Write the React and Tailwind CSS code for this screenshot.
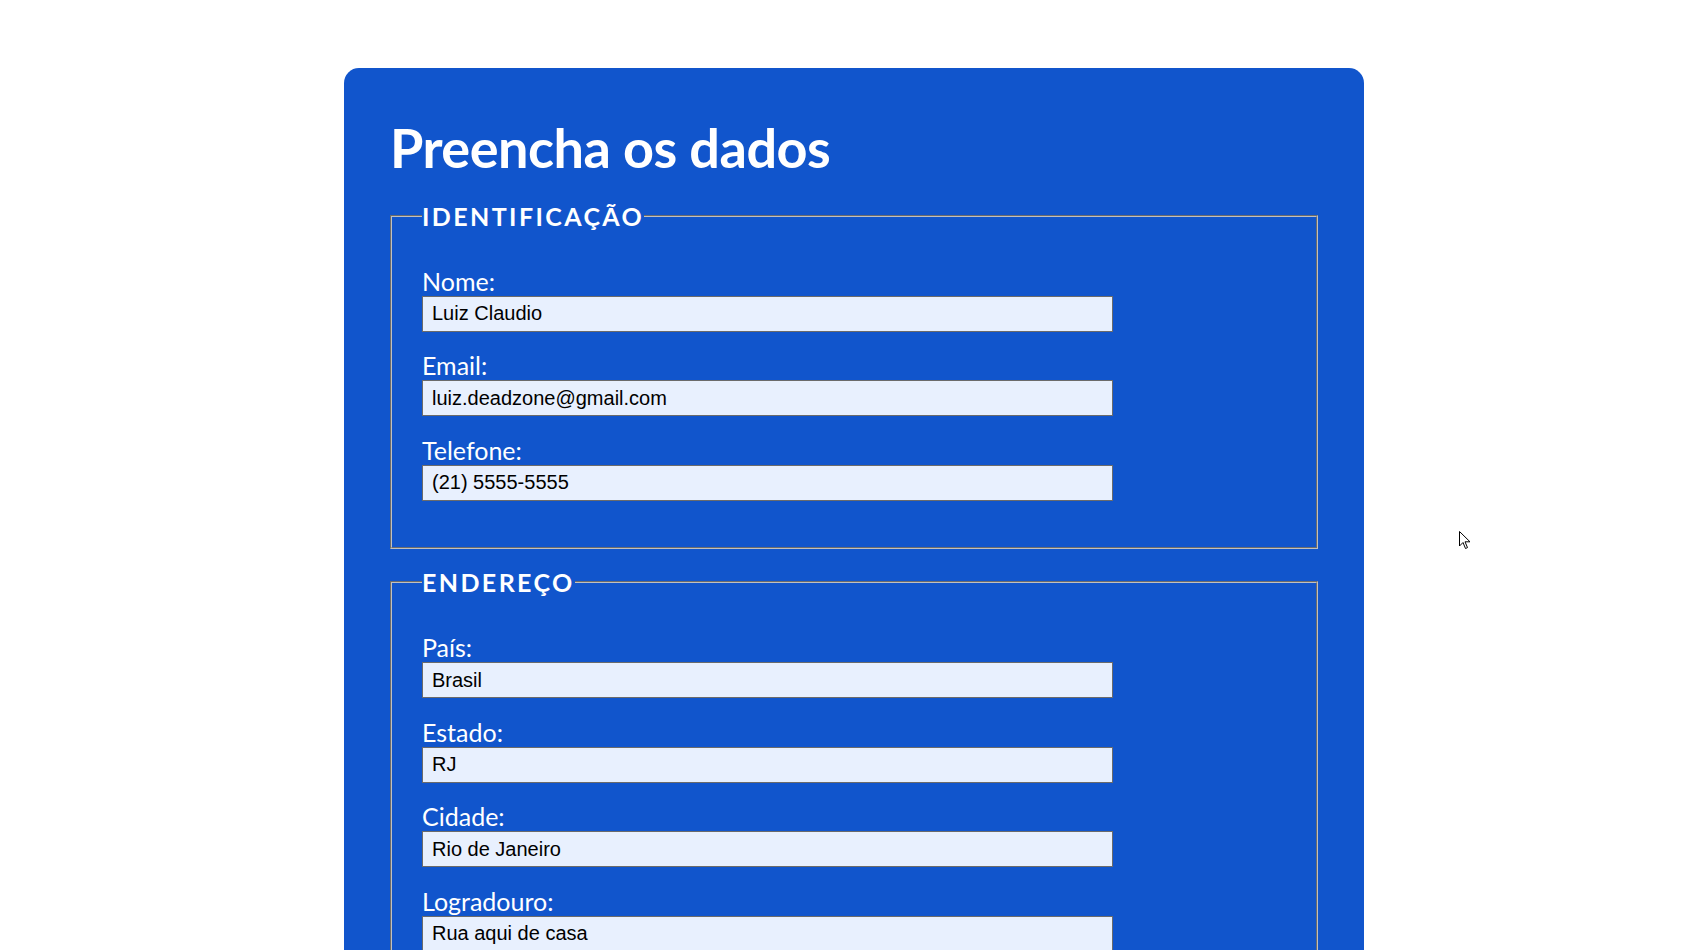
const Field = ({ label, value }) => (
  <div className="flex flex-col">
    <label className="text-[25px] leading-[30px] text-white">{label}</label>
    <input
      defaultValue={value}
      className="h-[36px] w-[80%] border border-[#6b6b6b] bg-[#e8f0fe] pl-[9px] pr-2 text-[20px] text-black font-['Liberation_Sans',Arial,sans-serif] outline-none"
    />
  </div>
)

const Section = ({ title, fields, className = '' }) => (
  <fieldset className={`border-2 [border-style:groove] border-[#c0c0c0] px-[30px] pt-[35px] pb-[46px] ${className}`}>
    <legend className="text-[25px] leading-[30px] font-bold tracking-[2.4px] text-white">{title}</legend>
    <div className="flex flex-col gap-[18.5px]">
      {fields.map((f) => (
        <Field key={f.label} label={f.label} value={f.value} />
      ))}
    </div>
  </fieldset>
)

const identificacao = [
  { label: 'Nome:', value: 'Luiz Claudio' },
  { label: 'Email:', value: 'luiz.deadzone@gmail.com' },
  { label: 'Telefone:', value: '(21) 5555-5555' },
]

const endereco = [
  { label: 'País:', value: 'Brasil' },
  { label: 'Estado:', value: 'RJ' },
  { label: 'Cidade:', value: 'Rio de Janeiro' },
  { label: 'Logradouro:', value: 'Rua aqui de casa' },
]

export default function App() {
  return (
    <div className="relative h-screen overflow-hidden bg-white pt-[68px] font-['Lato',sans-serif]">
      <form className="ml-[344px] w-[1020px] rounded-t-[15px] bg-[#1155cc] px-[46px] pt-[48px] pb-12">
        <h1 className="mb-[20px] text-[54px] leading-[64.8px] font-bold tracking-[-0.5px] text-white">Preencha os dados</h1>
        <Section title="IDENTIFICAÇÃO" fields={identificacao} />
        <Section title="ENDEREÇO" fields={endereco} className="mt-[18.5px]" />
      </form>

      {/* cursor do mouse */}
      <svg className="absolute left-[1459px] top-[531px]" width="13" height="19" viewBox="0 0 13 19">
        <path d="M0.5 0.5 L0.5 15 L4 11.5 L6.5 17.5 L8.5 16.6 L6 10.8 L11 10.8 Z" fill="white" stroke="black" strokeWidth="1" strokeLinejoin="round" />
      </svg>
    </div>
  )
}
